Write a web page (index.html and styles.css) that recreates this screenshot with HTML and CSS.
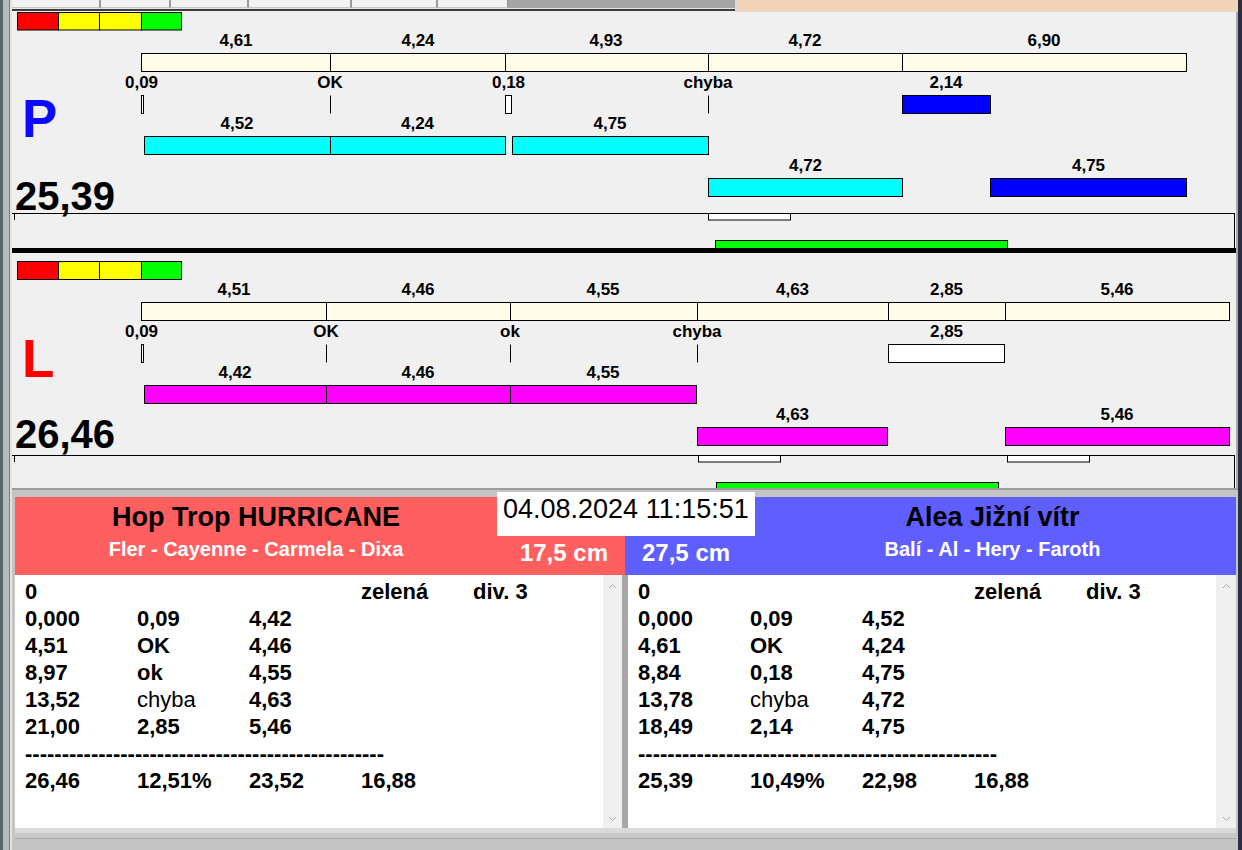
FILE: index.html
```html
<!DOCTYPE html>
<html lang="cs">
<head>
<meta charset="utf-8">
<title>Výsledky</title>
<link rel="stylesheet" href="styles.css">
</head>
<body>
<div class="edge-l"></div>
<div class="app">
  <div class="topbar">
    <div class="tabs">
      <div class="tabrow">
        <span class="tab w87"></span><span class="tab w68"></span><span class="tab w76"></span><span class="tab w101"></span><span class="tab w84"></span><span class="tab w69"></span>
      </div>
      <div class="tabline"></div>
    </div>
    <div class="peach"></div>
  </div>

  <svg class="chart" width="1224" height="236" viewBox="12 12 1224 236" xmlns="http://www.w3.org/2000/svg">
    <rect class="red" x="17.5" y="12.5" width="41" height="17.5"/>
    <rect class="yel" x="58.5" y="12.5" width="41" height="17.5"/>
    <rect class="yel" x="99.5" y="12.5" width="42" height="17.5"/>
    <rect class="grn" x="141.5" y="12.5" width="40" height="17.5"/>

    <text class="v" x="236" y="46">4,61</text>
    <text class="v" x="418" y="46">4,24</text>
    <text class="v" x="606" y="46">4,93</text>
    <text class="v" x="805" y="46">4,72</text>
    <text class="v" x="1044" y="46">6,90</text>
    <rect class="cream" x="141.5" y="53.5" width="189" height="18"/>
    <rect class="cream" x="330.5" y="53.5" width="175" height="18"/>
    <rect class="cream" x="505.5" y="53.5" width="203" height="18"/>
    <rect class="cream" x="708.5" y="53.5" width="194" height="18"/>
    <rect class="cream" x="902.5" y="53.5" width="284" height="18"/>

    <text class="v" x="141.5" y="88">0,09</text>
    <text class="v" x="330" y="88">OK</text>
    <text class="v" x="508.5" y="88">0,18</text>
    <text class="v" x="708" y="88">chyba</text>
    <text class="v" x="946" y="88">2,14</text>
    <rect class="wht" x="141.5" y="95.5" width="2" height="18"/>
    <line class="ln" x1="330.5" y1="95.5" x2="330.5" y2="113.5"/>
    <rect class="wht" x="505.5" y="95.5" width="6" height="18"/>
    <line class="ln" x1="708.5" y1="95.5" x2="708.5" y2="113.5"/>
    <rect class="blu" x="902.5" y="95.5" width="88" height="18"/>

    <text class="letter lp" x="22" y="137">P</text>

    <text class="v" x="237" y="129">4,52</text>
    <text class="v" x="417.5" y="129">4,24</text>
    <text class="v" x="610" y="129">4,75</text>
    <rect class="cyn" x="144.5" y="136.5" width="186" height="18"/>
    <rect class="cyn" x="330.5" y="136.5" width="175" height="18"/>
    <rect class="cyn" x="512.5" y="136.5" width="196" height="18"/>

    <text class="v" x="805.5" y="171">4,72</text>
    <text class="v" x="1088.5" y="171">4,75</text>
    <rect class="cyn" x="708.5" y="178.5" width="194" height="18"/>
    <rect class="blu" x="990.5" y="178.5" width="196" height="18"/>

    <text class="big" x="15" y="210">25,39</text>

    <line class="ln" x1="12" y1="213.5" x2="1235" y2="213.5"/>
    <line class="ln" x1="1234.5" y1="213.5" x2="1234.5" y2="248"/>
    <line class="ln" x1="14.5" y1="213.5" x2="14.5" y2="220"/>
    <rect class="wht" x="708.5" y="213.5" width="82" height="6.5"/>
    <rect class="grn" x="715.5" y="240.5" width="292" height="10"/>
  </svg>

  <div class="divider"></div>

  <svg class="chart" width="1224" height="235" viewBox="12 253 1224 235" xmlns="http://www.w3.org/2000/svg">
    <rect class="red" x="17.5" y="261.5" width="41" height="18"/>
    <rect class="yel" x="58.5" y="261.5" width="41" height="18"/>
    <rect class="yel" x="99.5" y="261.5" width="42" height="18"/>
    <rect class="grn" x="141.5" y="261.5" width="40" height="18"/>

    <text class="v" x="234" y="295">4,51</text>
    <text class="v" x="418" y="295">4,46</text>
    <text class="v" x="603" y="295">4,55</text>
    <text class="v" x="792.5" y="295">4,63</text>
    <text class="v" x="946.5" y="295">2,85</text>
    <text class="v" x="1117" y="295">5,46</text>
    <rect class="cream" x="141.5" y="302.5" width="185" height="18"/>
    <rect class="cream" x="326.5" y="302.5" width="184" height="18"/>
    <rect class="cream" x="510.5" y="302.5" width="187" height="18"/>
    <rect class="cream" x="697.5" y="302.5" width="191" height="18"/>
    <rect class="cream" x="888.5" y="302.5" width="117" height="18"/>
    <rect class="cream" x="1005.5" y="302.5" width="224" height="18"/>

    <text class="v" x="141.5" y="337">0,09</text>
    <text class="v" x="326" y="337">OK</text>
    <text class="v" x="510" y="337">ok</text>
    <text class="v" x="697" y="337">chyba</text>
    <text class="v" x="946.5" y="337">2,85</text>
    <rect class="wht" x="141.5" y="344.5" width="2" height="18"/>
    <line class="ln" x1="326.5" y1="344.5" x2="326.5" y2="362.5"/>
    <line class="ln" x1="510.5" y1="344.5" x2="510.5" y2="362.5"/>
    <line class="ln" x1="697.5" y1="344.5" x2="697.5" y2="362.5"/>
    <rect class="wht" x="888.5" y="344.5" width="116" height="18"/>

    <text class="letter ll" x="22" y="377">L</text>

    <text class="v" x="235" y="378">4,42</text>
    <text class="v" x="418" y="378">4,46</text>
    <text class="v" x="603" y="378">4,55</text>
    <rect class="mag" x="144.5" y="385.5" width="182" height="18"/>
    <rect class="mag" x="326.5" y="385.5" width="184" height="18"/>
    <rect class="mag" x="510.5" y="385.5" width="186" height="18"/>

    <text class="v" x="792.5" y="420">4,63</text>
    <text class="v" x="1117" y="420">5,46</text>
    <rect class="mag" x="697.5" y="427.5" width="190" height="18"/>
    <rect class="mag" x="1005.5" y="427.5" width="224" height="18"/>

    <text class="big" x="15" y="448">26,46</text>

    <line class="ln" x1="12" y1="455.5" x2="1235" y2="455.5"/>
    <line class="ln" x1="1234.5" y1="455.5" x2="1234.5" y2="488"/>
    <line class="ln" x1="14.5" y1="455.5" x2="14.5" y2="462"/>
    <rect class="wht" x="698.5" y="455.5" width="82" height="6.5"/>
    <rect class="wht" x="1007.5" y="455.5" width="82" height="6.5"/>
    <rect class="grn" x="716.5" y="482.5" width="282" height="10"/>
  </svg>

  <section class="result">
    <div class="date">04.08.2024 11:15:51</div>
    <div class="headers">
      <div class="team team-l">
        <div class="names">
          <div class="title">Hop Trop HURRICANE</div>
          <div class="dogs">Fler - Cayenne - Carmela - Dixa</div>
        </div>
        <div class="cm cm-l">17,5 cm</div>
      </div>
      <div class="team team-r">
        <div class="cm cm-r">27,5 cm</div>
        <div class="names names-r">
          <div class="title">Alea Jižní vítr</div>
          <div class="dogs">Balí - Al - Hery - Faroth</div>
        </div>
      </div>
    </div>
    <div class="boxes">
      <div class="box box-l">
        <div class="list">
          <div class="row"><span>0</span><span></span><span></span><span>zelená</span><span>div. 3</span></div>
          <div class="row"><span>0,000</span><span>0,09</span><span>4,42</span></div>
          <div class="row"><span>4,51</span><span>OK</span><span>4,46</span></div>
          <div class="row"><span>8,97</span><span>ok</span><span>4,55</span></div>
          <div class="row"><span>13,52</span><span class="reg">chyba</span><span>4,63</span></div>
          <div class="row"><span>21,00</span><span>2,85</span><span>5,46</span></div>
          <div class="row dash">-------------------------------------------------</div>
          <div class="row"><span>26,46</span><span>12,51%</span><span>23,52</span><span>16,88</span></div>
        </div>
        <div class="sb">
          <svg width="9" height="6" viewBox="0 0 9 6"><path d="M1 5 L4.5 1.5 L8 5" class="chev"/></svg>
          <svg width="9" height="6" viewBox="0 0 9 6"><path d="M1 1 L4.5 4.5 L8 1" class="chev"/></svg>
        </div>
      </div>
      <div class="box box-r">
        <div class="list">
          <div class="row"><span>0</span><span></span><span></span><span>zelená</span><span>div. 3</span></div>
          <div class="row"><span>0,000</span><span>0,09</span><span>4,52</span></div>
          <div class="row"><span>4,61</span><span>OK</span><span>4,24</span></div>
          <div class="row"><span>8,84</span><span>0,18</span><span>4,75</span></div>
          <div class="row"><span>13,78</span><span class="reg">chyba</span><span>4,72</span></div>
          <div class="row"><span>18,49</span><span>2,14</span><span>4,75</span></div>
          <div class="row dash">-------------------------------------------------</div>
          <div class="row"><span>25,39</span><span>10,49%</span><span>22,98</span><span>16,88</span></div>
        </div>
        <div class="sb sb-r">
          <svg width="9" height="6" viewBox="0 0 9 6"><path d="M1 5 L4.5 1.5 L8 5" class="chev"/></svg>
          <svg width="9" height="6" viewBox="0 0 9 6"><path d="M1 1 L4.5 4.5 L8 1" class="chev"/></svg>
        </div>
      </div>
    </div>
    <div class="footer"></div>
  </section>
</div>
<div class="edge-r"></div>
</body>
</html>
```

FILE: styles.css
```css
html, body {
  margin: 0;
  padding: 0;
}
body {
  width: 1242px;
  height: 850px;
  overflow: hidden;
  display: flex;
  background: #2b2d45;
  font-family: "Liberation Sans", Arial, sans-serif;
  color: #000;
}
.edge-l {
  width: 12px;
  flex: none;
  background: linear-gradient(to right, #56676a 0 3px, #b4bcbc 3px 9px, #7c7c7c 9px 10px, #e4e4e4 10px 12px);
}
.edge-r {
  width: 4px;
  flex: none;
  background: #2b2d45;
}
.app {
  width: 1226px;
  flex: none;
  display: flex;
  flex-direction: column;
  background: #f0f0f0;
}

/* top strip */
.topbar {
  height: 12px;
  display: flex;
}
.tabs {
  width: 723px;
  display: flex;
  flex-direction: column;
}
.tabrow {
  height: 8px;
  display: flex;
  background: #a6a6a6;
}
.tab {
  height: 7px;
  background: #f2f2f2;
  border-right: 2px solid #9a9a9a;
  border-bottom: 1px solid #c8c8c8;
}
.w87 { width: 87px; }
.w68 { width: 68px; }
.w76 { width: 76px; }
.w101 { width: 101px; }
.w84 { width: 84px; }
.w69 { width: 69px; }
.tabline {
  height: 4px;
  background: linear-gradient(#e6e6e6 0 1px, #3c3c3c 1px 3px, #f0f0f0 3px 4px);
}
.peach {
  flex: 1;
  background: #f2d4b9;
  border-left: 2px solid #d8d8d8;
  border-bottom: 1px solid #e9dccd;
}

/* charts */
.chart {
  display: block;
  background: #f0f0f0;
  border-right: 2px solid #a9a9a9;
}
.divider {
  height: 5px;
  width: 1224px;
  background: #000;
  border-right: 2px solid #a9a9a9;
}
.chart rect, .chart line {
  stroke: #000;
  stroke-width: 1;
}
.cream { fill: #fffde8; }
.red { fill: #ff0000; }
.yel { fill: #ffff00; }
.grn { fill: #00ff00; }
.wht { fill: #ffffff; }
.blu { fill: #0000ff; }
.cyn { fill: #00ffff; }
.mag { fill: #ff00ff; }
.v {
  font-family: "Liberation Sans", Arial, sans-serif;
  font-weight: bold;
  font-size: 17px;
  text-anchor: middle;
  fill: #000;
}
.big {
  font-family: "Liberation Sans", Arial, sans-serif;
  font-weight: bold;
  font-size: 40px;
  fill: #000;
}
.letter {
  font-family: "Liberation Sans", Arial, sans-serif;
  font-weight: bold;
  font-size: 53px;
}
.lp { fill: #0a0aff; }
.ll { fill: #ff0000; }

/* result section */
.result {
  position: relative;
  height: 362px;
  padding: 9px 2px 0 3px;
  box-sizing: border-box;
  background: linear-gradient(#9c9c9c 0 2px, #c4c4c4 2px);
  display: flex;
  flex-direction: column;
}
.date {
  position: absolute;
  left: 485px;
  top: 4px;
  width: 258px;
  height: 44px;
  box-sizing: border-box;
  padding: 2px 0 0 6px;
  background: #fff;
  font-size: 27px;
  line-height: 31px;
  white-space: nowrap;
}
.headers {
  display: flex;
  height: 78px;
}
.team {
  display: flex;
}
.team-l {
  width: 610px;
  background: #ff5f5f;
}
.team-r {
  width: 611px;
  background: #5f5fff;
}
.names {
  width: 482px;
  display: flex;
  flex-direction: column;
  align-items: center;
}
.names-r {
  width: 481px;
  padding-right: 6px;
  box-sizing: border-box;
}
.title {
  height: 40px;
  line-height: 40px;
  font-size: 27px;
  font-weight: bold;
  white-space: nowrap;
}
.dogs {
  padding-top: 1px;
  line-height: 23px;
  font-size: 20px;
  font-weight: bold;
  color: #fff;
  white-space: nowrap;
}
.cm {
  box-sizing: border-box;
  padding-top: 42px;
  font-size: 24px;
  line-height: 28px;
  font-weight: bold;
  color: #fff;
  white-space: nowrap;
}
.cm-l {
  width: 128px;
  text-align: right;
  padding-right: 17px;
}
.cm-r {
  width: 130px;
  padding-left: 17px;
}
.boxes {
  display: flex;
  gap: 6px;
  height: 253px;
  background: #a8a8a8;
}
.box {
  display: flex;
  background: #fff;
}
.box-l { width: 607px; }
.box-r { width: 608px; }
.list {
  flex: 1;
  padding: 3px 0 0 10px;
}
.row {
  display: grid;
  grid-template-columns: 112px 112px 112px 112px auto;
  height: 27px;
  line-height: 27px;
  font-size: 22px;
  font-weight: bold;
  white-space: nowrap;
}
.row.dash {
  display: block;
}
.reg {
  font-weight: normal;
}
.sb {
  width: 19px;
  background: #f0f0f0;
  display: flex;
  flex-direction: column;
  justify-content: space-between;
  align-items: center;
  padding: 8px 0 6px;
}
.sb-r {
  width: 20px;
}
.chev {
  fill: none;
  stroke: #a6a6a6;
  stroke-width: 1;
}
.footer {
  height: 22px;
  background: linear-gradient(#dadada 0 5px, #c9c9c9 5px 10px, #a9a9a9 10px 11px, #c4c4c4 11px);
}
```
